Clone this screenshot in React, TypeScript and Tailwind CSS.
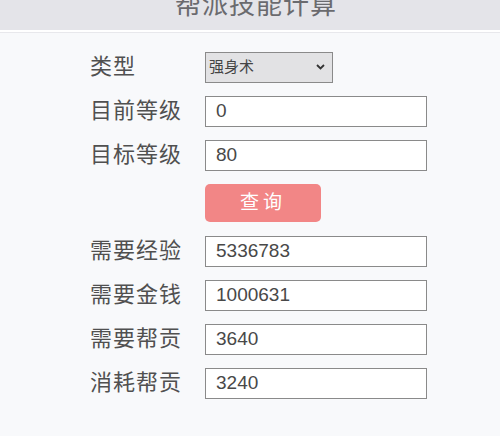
import React from "react";

const font = { fontFamily: '"Liberation Sans", "Noto Sans CJK SC", sans-serif' };

function Row({ label, children }: { label: string; children: React.ReactNode }) {
  return (
    <div className="flex items-center h-[30px]">
      <div className="w-[115px] text-[22px] leading-none tracking-[1px] text-[#505050]">{label}</div>
      {children}
    </div>
  );
}

function Field({ value }: { value: string }) {
  return (
    <input
      readOnly
      value={value}
      className="w-[222px] h-[31px] border border-[#8a8a8a] bg-white pl-[10px] text-[19px] text-[#484848] outline-none"
      style={font}
    />
  );
}

export default function App() {
  return (
    <div className="w-[500px] h-[436px] bg-[#f8f9fb] overflow-hidden" style={font}>
      <div className="h-[30px] bg-[#e4e4e9] overflow-hidden flex justify-center">
        <div className="text-[26px] leading-none tracking-[1px] text-[#6a6a6e] mt-[-8px] ml-[12px]">帮派技能计算</div>
      </div>
      <div className="h-[2px] bg-white" />
      <div className="h-[1px] bg-[#e8e8ec]" />
      <div className="pl-[90px] pt-[19px] flex flex-col gap-[14px]">
        <Row label="类型">
          <div className="relative w-[128px] h-[31px]">
            <select
              className="appearance-none w-full h-full border border-[#8a8a8a] bg-[#e2e2e4] pl-[3px] text-[15px] text-[#444] outline-none"
              style={font}
              defaultValue="强身术"
            >
              <option>强身术</option>
            </select>
            <svg className="absolute right-[8px] top-[12px] pointer-events-none" width="9" height="6" viewBox="0 0 9 6">
              <path d="M1 1 L4.5 4.5 L8 1" stroke="#333" strokeWidth="1.8" fill="none" />
            </svg>
          </div>
        </Row>
        <Row label="目前等级">
          <Field value="0" />
        </Row>
        <Row label="目标等级">
          <Field value="80" />
        </Row>
        <div className="flex h-[38px]">
          <div className="w-[115px]" />
          <button className="w-[116px] h-[38px] rounded-[5px] bg-[#f28686] text-white text-[19px] tracking-[4px]" style={font}>
            查询
          </button>
        </div>
        <Row label="需要经验">
          <Field value="5336783" />
        </Row>
        <Row label="需要金钱">
          <Field value="1000631" />
        </Row>
        <Row label="需要帮贡">
          <Field value="3640" />
        </Row>
        <Row label="消耗帮贡">
          <Field value="3240" />
        </Row>
      </div>
    </div>
  );
}
